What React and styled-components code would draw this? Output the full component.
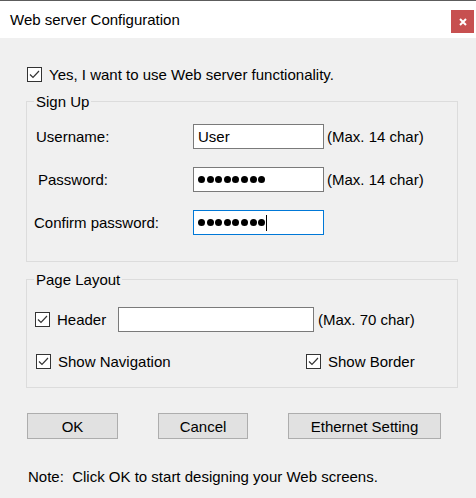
import React from 'react';
import styled, { createGlobalStyle } from 'styled-components';

const GlobalStyle = createGlobalStyle`
  html, body {
    margin: 0;
    padding: 0;
    background: #f0f0f0;
  }
  * {
    box-sizing: border-box;
  }
`;

const Window = styled.div`
  width: 476px;
  height: 498px;
  display: flex;
  flex-direction: column;
  background: #f0f0f0;
  border-top: 1px solid #5c5c5c;
  font-family: 'Liberation Sans', Arial, sans-serif;
  font-size: 15px;
  line-height: 17px;
  color: #000;
  overflow: hidden;
`;

const TitleBar = styled.div`
  height: 37px;
  display: flex;
  align-items: center;
  background: #fff;
  padding-left: 10px;
`;

const Title = styled.span`
  font-size: 15px;
  color: #000;
`;

const CloseButton = styled.button`
  margin-left: auto;
  align-self: flex-start;
  margin-top: 9px;
  margin-right: 2px;
  width: 23px;
  height: 23px;
  padding: 0;
  border: none;
  background: #c75050;
  display: flex;
  align-items: center;
  justify-content: center;
`;

const Body = styled.div`
  padding: 28px 18px 0 26px;
  display: flex;
  flex-direction: column;
`;

const CheckItem = styled.label`
  display: flex;
  align-items: center;
  gap: 7px;
  margin-left: ${(p) => p.$indent || 0}px;
  width: ${(p) => (p.$width ? `${p.$width}px` : 'auto')};
  flex-shrink: 0;
  white-space: nowrap;
`;

const Box = styled.span`
  width: 15px;
  height: 15px;
  border: 1px solid #333;
  background: #fff;
  display: flex;
  align-items: center;
  justify-content: center;
  flex-shrink: 0;
`;

const Group = styled.fieldset`
  margin: ${(p) => p.$top}px 0 0 0;
  padding: 0;
  border: 1px solid #dcdcdc;
  min-width: 0;
`;

const Legend = styled.legend`
  margin-left: 7px;
  padding: 0 2px;
  line-height: 17px;
`;

const FormGrid = styled.div`
  display: grid;
  grid-template-columns: 157px 131px auto;
  row-gap: 18px;
  align-items: center;
  padding: 14px 0 26px 9px;
`;

const Label = styled.span`
  margin-left: ${(p) => p.$shift || 0}px;
`;

const Field = styled.div`
  height: 25px;
  width: ${(p) => p.$width}px;
  border: 1px solid ${(p) => (p.$focused ? '#0078d7' : '#7a7a7a')};
  background: #fff;
  display: flex;
  align-items: center;
  padding-left: 4px;
  flex-shrink: 0;
`;

const Dots = styled.span`
  display: flex;
  align-items: center;
  gap: 1.6px;
`;

const Dot = styled.span`
  width: 7px;
  height: 7px;
  border-radius: 50%;
  background: #000;
`;

const Caret = styled.span`
  width: 1px;
  height: 16px;
  background: #000;
  margin-left: 1px;
`;

const Hint = styled.span`
  margin-left: ${(p) => p.$gap}px;
  white-space: nowrap;
`;

const LayoutRows = styled.div`
  display: flex;
  flex-direction: column;
  gap: 21px;
  padding: 19px 0 17px 8px;
`;

const Row = styled.div`
  display: flex;
  align-items: center;
`;

const ButtonRow = styled.div`
  display: flex;
  gap: 40px;
  margin-top: 25px;
  padding-left: 1px;
`;

const Button = styled.button`
  width: ${(p) => p.$width}px;
  height: 26px;
  border: 1px solid #adadad;
  background: #e1e1e1;
  font-family: inherit;
  font-size: 15px;
  color: #000;
  padding: 0;
`;

const Note = styled.div`
  margin-top: 29px;
  padding-left: 2px;
  white-space: pre;
`;

const Check = ({ children, ...rest }) => (
  <CheckItem {...rest}>
    <Box>
      <svg width="13" height="13" viewBox="0 0 13 13">
        <path d="M2 6.5 L5 9.5 L11 3" fill="none" stroke="#333" strokeWidth="1.2" />
      </svg>
    </Box>
    {children}
  </CheckItem>
);

const Password = ({ focused }) => (
  <Field $width={131} $focused={focused}>
    <Dots>
      {Array.from({ length: 8 }).map((_, i) => (
        <Dot key={i} />
      ))}
    </Dots>
    {focused && <Caret />}
  </Field>
);

export default function App() {
  return (
    <>
      <GlobalStyle />
      <Window>
        <TitleBar>
          <Title>Web server Configuration</Title>
          <CloseButton aria-label="Close">
            <svg width="8" height="8" viewBox="0 0 8 8">
              <path d="M1 1 L7 7 M7 1 L1 7" stroke="#fff" strokeWidth="2" />
            </svg>
          </CloseButton>
        </TitleBar>

        <Body>
          <Check $indent={1}>Yes, I want to use Web server functionality.</Check>

          <Group $top={10}>
            <Legend>Sign Up</Legend>
            <FormGrid>
              <Label>Username:</Label>
              <Field $width={131}>User</Field>
              <Hint $gap={3}>(Max. 14 char)</Hint>

              <Label $shift={2}>Password:</Label>
              <Password />
              <Hint $gap={3}>(Max. 14 char)</Hint>

              <Label $shift={-2}>Confirm password:</Label>
              <Password focused />
              <span />
            </FormGrid>
          </Group>

          <Group $top={9}>
            <Legend>Page Layout</Legend>
            <LayoutRows>
              <Row>
                <Check $width={83}>Header</Check>
                <Field $width={196} />
                <Hint $gap={4}>(Max. 70 char)</Hint>
              </Row>
              <Row>
                <Check $width={270} $indent={1}>Show Navigation</Check>
                <Check>Show Border</Check>
              </Row>
            </LayoutRows>
          </Group>

          <ButtonRow>
            <Button $width={91}>OK</Button>
            <Button $width={90}>Cancel</Button>
            <Button $width={153}>Ethernet Setting</Button>
          </ButtonRow>

          <Note>Note:  Click OK to start designing your Web screens.</Note>
        </Body>
      </Window>
    </>
  );
}
